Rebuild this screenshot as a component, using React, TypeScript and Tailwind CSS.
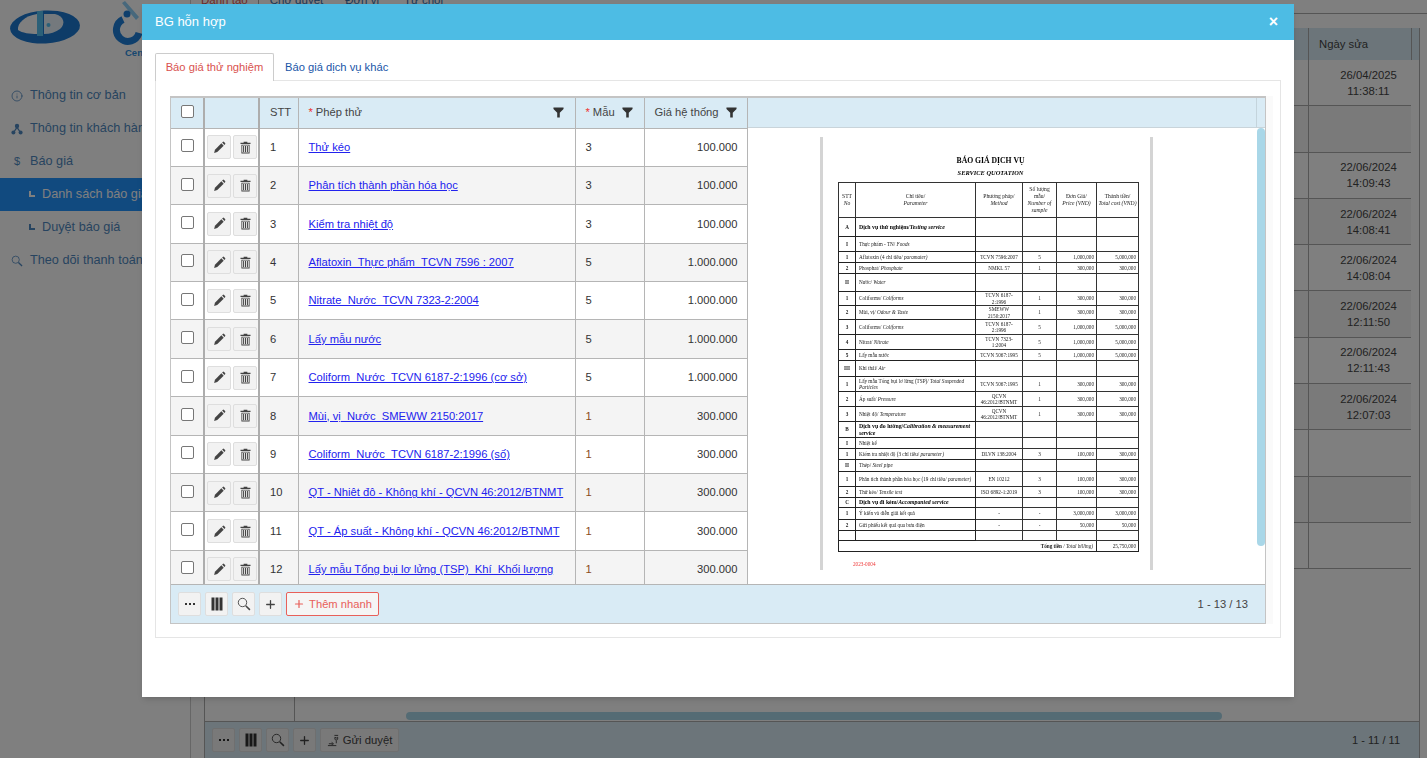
import { Info, Plus } from "lucide-react";

const tests = [
  { name: "Thử kéo", qty: "3", price: "100.000" },
  { name: "Phân tích thành phần hóa học", qty: "3", price: "100.000" },
  { name: "Kiểm tra nhiệt độ", qty: "3", price: "100.000" },
  { name: "Aflatoxin_Thực phẩm_TCVN 7596 : 2007", qty: "5", price: "1.000.000" },
  { name: "Nitrate_Nước_TCVN 7323-2:2004", qty: "5", price: "1.000.000" },
  { name: "Lấy mẫu nước", qty: "5", price: "1.000.000" },
  { name: "Coliform_Nước_TCVN 6187-2:1996 (cơ sở)", qty: "5", price: "1.000.000" },
  { name: "Mùi, vị_Nước_SMEWW 2150:2017", qty: "1", price: "300.000" },
  { name: "Coliform_Nước_TCVN 6187-2:1996 (số)", qty: "1", price: "300.000" },
  { name: "QT - Nhiệt độ - Không khí - QCVN 46:2012/BTNMT", qty: "1", price: "300.000" },
  { name: "QT - Áp suất - Không khí - QCVN 46:2012/BTNMT", qty: "1", price: "300.000" },
  { name: "Lấy mẫu Tổng bụi lơ lửng (TSP)_Khí_Khối lượng", qty: "1", price: "300.000" },
];

const dates = [
  ["26/04/2025", "11:38:11"],
  null,
  ["22/06/2024", "14:09:43"],
  ["22/06/2024", "14:08:41"],
  ["22/06/2024", "14:08:04"],
  ["22/06/2024", "12:11:50"],
  ["22/06/2024", "12:11:43"],
  ["22/06/2024", "12:07:03"],
  null,
  null,
  null,
];

// rows of the scanned quotation, h is the row height in the picture
const docRows = [
  { h: "h-[19px]", no: "A", name: "Dịch vụ thử nghiệm/Testing service", bold: true },
  { h: "h-[15px]", no: "I", name: "Thực phẩm - TN/ Foods" },
  { h: "h-[11px]", no: "1", name: "Aflatoxin (4 chỉ tiêu/ paramater)", m: "TCVN 7596:2007", q: "5", p: "1,000,000", t: "5,000,000" },
  { h: "h-[11px]", no: "2", name: "Phosphat/ Phosphate", m: "NMKL 57", q: "1", p: "300,000", t: "300,000" },
  { h: "h-[18px]", no: "II", name: "Nước/ Water" },
  { h: "h-[14px]", no: "1", name: "Coliforms/ Coliforms", m: "TCVN 6187-2:1996", q: "1", p: "300,000", t: "300,000" },
  { h: "h-[14px]", no: "2", name: "Mùi, vị/ Odour & Taste", m: "SMEWW 2150:2017", q: "1", p: "300,000", t: "300,000" },
  { h: "h-[15px]", no: "3", name: "Coliforms/ Coliforms", m: "TCVN 6187-2:1996", q: "5", p: "1,000,000", t: "5,000,000" },
  { h: "h-[15px]", no: "4", name: "Nitrat/ Nitrate", m: "TCVN 7323-1:2004", q: "5", p: "1,000,000", t: "5,000,000" },
  { h: "h-[11px]", no: "5", name: "Lấy mẫu nước", m: "TCVN 5067:1995", q: "5", p: "1,000,000", t: "5,000,000" },
  { h: "h-[16px]", no: "III", name: "Khí thải/ Air" },
  { h: "h-[15px]", no: "1", name: "Lấy mẫu Tổng bụi lơ lửng (TSP)/ Total Suspended Particles", m: "TCVN 5067:1995", q: "1", p: "300,000", t: "300,000" },
  { h: "h-[15px]", no: "2", name: "Áp suất/ Pressure", m: "QCVN 46:2012/BTNMT", q: "1", p: "300,000", t: "300,000" },
  { h: "h-[15px]", no: "3", name: "Nhiệt độ/ Temperature", m: "QCVN 46:2012/BTNMT", q: "1", p: "300,000", t: "300,000" },
  { h: "h-[16px]", no: "B", name: "Dịch vụ đo lường/Calibration & measurement service", bold: true },
  { h: "h-[11px]", no: "I", name: "Nhiệt kế" },
  { h: "h-[11px]", no: "1", name: "Kiểm tra nhiệt độ (3 chỉ tiêu/ parameter)", m: "DLVN 138:2004", q: "3", p: "100,000", t: "300,000" },
  { h: "h-[12px]", no: "II", name: "Thép/ Steel pipe" },
  { h: "h-[15px]", no: "1", name: "Phân tích thành phần hóa học (19 chỉ tiêu/ parameter)", m: "EN 10212", q: "3", p: "100,000", t: "300,000" },
  { h: "h-[11px]", no: "2", name: "Thử kéo/ Tensile test", m: "ISO 6892-1:2019", q: "3", p: "100,000", t: "300,000" },
  { h: "h-[10px]", no: "C", name: "Dịch vụ đi kèm/Accompanied service", bold: true },
  { h: "h-[12px]", no: "1", name: "Ý kiến và diễn giải kết quả", m: "-", q: "-", p: "3,000,000", t: "3,000,000" },
  { h: "h-[11px]", no: "2", name: "Gửi phiếu kết quả qua bưu điện", m: "-", q: "-", p: "50,000", t: "50,000" },
  { h: "h-[10px]", no: "", name: "", m: "", q: "", p: "", t: "" },
];

function FilterIcon() {
  return (
    <svg viewBox="0 0 12 12" className="h-[11px] w-[11px] shrink-0 fill-[#333]">
      <path d="M0.5 0.5h11v1.8L7.4 6.2v5.3H4.6V6.2L0.5 2.3z" />
    </svg>
  );
}

function PencilIcon() {
  return (
    <svg viewBox="0 0 14 14" className="h-[13px] w-[13px] fill-[#444]">
      <path d="M1.2 12.8l.9-3.4 6.9-6.9 2.5 2.5-6.9 6.9z" />
      <path d="M9.8 1.7l.7-.7a1 1 0 0 1 1.4 0l1.1 1.1a1 1 0 0 1 0 1.4l-.7.7z" />
    </svg>
  );
}

function TrashIcon() {
  return (
    <svg viewBox="0 0 14 14" className="h-[13px] w-[13px] fill-[#444]">
      <path d="M5 .8h4V2h3.4v1.3H1.6V2H5z" />
      <path d="M2.6 4h8.8v9.4H2.6zM3.5 4.9v7.6h7V4.9z" fillRule="evenodd" />
      <rect x="4.4" y="5.4" width="1.1" height="6.6" />
      <rect x="6.45" y="5.4" width="1.1" height="6.6" />
      <rect x="8.5" y="5.4" width="1.1" height="6.6" />
    </svg>
  );
}

function SearchIcon({ className }: { className: string }) {
  return (
    <svg viewBox="0 0 14 14" className={className}>
      <circle cx="5.5" cy="5.5" r="4.2" fill="none" stroke="currentColor" strokeWidth="0.9" />
      <path d="M8.7 8.7l4.2 4.2" stroke="currentColor" strokeWidth="1.5" />
    </svg>
  );
}

function ColumnsIcon() {
  return (
    <svg viewBox="0 0 12 14" className="h-[14px] w-[12px] fill-[#333]">
      <rect x="0.5" y="0.5" width="3" height="13" />
      <rect x="4.5" y="0.5" width="3" height="13" />
      <rect x="8.5" y="0.5" width="3" height="13" />
    </svg>
  );
}

function DotsIcon() {
  return (
    <svg viewBox="0 0 12 12" className="h-[12px] w-[12px] fill-[#333]">
      <rect x="1" y="5" width="2" height="2" />
      <rect x="5" y="5" width="2" height="2" />
      <rect x="9" y="5" width="2" height="2" />
    </svg>
  );
}

function ToolButton({ children, className }: { children: React.ReactNode; className?: string }) {
  return (
    <button className={"flex h-[24px] items-center justify-center rounded-[2px] border border-[#dedede] bg-[#f2f2f2] text-[#444] " + (className || "w-[24px]")}>
      {children}
    </button>
  );
}

function Toolbar() {
  return (
    <>
      <ToolButton className="w-[23px]"><DotsIcon /></ToolButton>
      <ToolButton className="w-[23px]"><ColumnsIcon /></ToolButton>
      <ToolButton className="w-[23px]"><SearchIcon className="h-[14px] w-[14px]" /></ToolButton>
      <ToolButton className="w-[23px]"><Plus className="h-[13px] w-[13px]" strokeWidth={2.4} /></ToolButton>
    </>
  );
}

function Checkbox({ className }: { className?: string }) {
  return <span className={"mx-auto block h-[13px] w-[13px] rounded-[2px] border border-[#777] bg-white " + (className || "")} />;
}

function Sidebar() {
  const itemClass = "flex h-[33px] items-center gap-[7px] pl-[11px] text-[#4f88c0]";
  const subClass = "flex h-[33px] items-center gap-[7px] pl-[29px] text-[#4f88c0]";
  return (
    <aside className="w-[191px] shrink-0 border-r border-[#ccc] text-[12.7px]">
      <div className="relative h-[79px]">
        <svg viewBox="0 0 142 60" className="h-[60px] w-[142px]">
          <ellipse cx="45" cy="27" rx="35" ry="16.5" fill="#1c78d0" transform="rotate(-3 45 27)" />
          <path d="M37 14C25 16 17 23 18 30c4 3 12 4 19 4z" fill="#fff" />
          <path d="M44 14h11c9 2 11 10 5 15-4 3-10 5-16 5z" fill="#e8f2fa" />
          <rect x="37" y="11" width="6" height="25" fill="#56c0f0" />
          <circle cx="48.5" cy="25" r="2" fill="#56c0f0" />
          <path d="M123 19.5A11.5 11.5 0 1 0 139 33" fill="none" stroke="#1f7fd8" strokeWidth="7" />
          <path d="M122 3l3-2 14 16-3 3z" fill="#8fd0f8" />
          <circle cx="127" cy="14" r="3.5" fill="#1f7fd8" />
        </svg>
        <span className="absolute left-[125px] top-[46px] text-[9.5px] font-bold text-[#2f8fe0]">Center</span>
      </div>
      <div className={itemClass}><Info className="h-[12px] w-[12px]" strokeWidth={1.6} />Thông tin cơ bản</div>
      <div className={itemClass}>
        <svg viewBox="0 0 12 12" className="h-[12px] w-[12px] fill-[#4f88c0]">
          <circle cx="6" cy="3" r="2.2" />
          <circle cx="2.4" cy="9.6" r="2" />
          <circle cx="9.6" cy="9.6" r="2" />
          <path d="M5.4 4h1.2L9.8 9H8.4L6 5.6 3.6 9H2.2z" />
        </svg>
        Thông tin khách hàng
      </div>
      <div className={itemClass}><span className="w-[12px] text-center text-[11px]">$</span>Báo giá</div>
      <div className="flex h-[33px] items-center gap-[7px] bg-[#2394fe] pl-[29px] text-white">
        <span className="mb-[2px] h-[6px] w-[6px] border-b-2 border-l-2 border-white" />
        Danh sách báo giá
      </div>
      <div className={subClass}>
        <span className="mb-[2px] h-[6px] w-[6px] border-b-2 border-l-2 border-[#4f88c0]" />
        Duyệt báo giá
      </div>
      <div className={itemClass}><SearchIcon className="h-[12px] w-[12px]" />Theo dõi thanh toán</div>
    </aside>
  );
}

function BackgroundPage() {
  return (
    <main className="flex min-w-0 flex-1 flex-col text-[11.3px] text-[#444]">
      <div className="h-[14px] shrink-0 overflow-hidden border-b border-[#aaa]">
        <div className="-mt-[8px] flex pl-[10px] text-[11.5px] text-[#3a6ea8]">
          <span className="border-r border-[#aaa] pr-[10px] text-[#d9534f]">Danh tạo</span>
          <span className="ml-[11px]">Chờ duyệt</span>
          <span className="ml-[22px]">Đơn vị</span>
          <span className="ml-[25px]">Từ chối</span>
        </div>
      </div>
      <div className="ml-[13px] mt-[14px] flex w-[1216px] flex-1 flex-col border-x border-[#aaa]">
        <div className="flex flex-1">
          <div className="w-[90px] shrink-0 border-r border-[#aaa]" />
          <div className="flex min-w-0 flex-1 flex-col">
            <div className="flex h-[32px] shrink-0 bg-[#d9ebf5]">
              <div className="flex-1" />
              <div className="flex w-[104px] items-center border-x border-[#aaa] pl-[10px]">Ngày sửa</div>
              <div className="w-[7px]" />
            </div>
            {dates.map((d, i) => (
              <div key={i} className={"mr-[8px] flex h-[46.3px] border-b border-[#aaa] " + (i % 2 === 1 ? "bg-[#f4f4f4]" : "")}>
                <div className="flex-1" />
                <div className="flex w-[103px] flex-col items-center justify-center border-l border-[#aaa] pl-[17px] leading-[16px]">
                  {d && <span>{d[0]}</span>}
                  {d && <span>{d[1]}</span>}
                </div>
              </div>
            ))}
            <div className="mb-[1px] ml-[111px] mt-auto h-[8px] w-[816px] rounded-full bg-[#a9d7e8]" />
          </div>
        </div>
        <div className="flex h-[37px] shrink-0 items-center gap-[4px] border-t border-[#aaa] bg-[#d9ebf5] pl-[7px] pr-[19px]">
          <Toolbar />
          <ToolButton className="w-[79px] gap-[3px]">
            <svg viewBox="0 0 14 14" className="h-[13px] w-[13px] fill-none stroke-[#444]">
              <path d="M1 12.5h9M2 10.5h4M5 9l2 1.5-2 1M8 1.5h4M8.5 3.5a2 2 0 0 0 3 0v2a1.6 1.6 0 0 1-3 0zM10 7v3" />
            </svg>
            Gửi duyệt
          </ToolButton>
          <span className="ml-auto text-[11px]">1 - 11 / 11</span>
        </div>
      </div>
    </main>
  );
}

function TestTable() {
  return (
    <table className="w-[576px] table-fixed border-collapse text-[11.2px] text-[#333]">
      <colgroup>
        <col className="w-[33px]" />
        <col className="w-[55px]" />
        <col className="w-[39px]" />
        <col className="w-[277px]" />
        <col className="w-[69px]" />
        <col className="w-[103px]" />
      </colgroup>
      <thead>
        <tr className="h-[30px] bg-[#d9ebf5] text-[#444]">
          <th className="border-b border-[#b5b5b5] font-normal"><Checkbox className="mb-[2px]" /></th>
          <th className="border-x-2 border-b border-x-[#adadad] border-b-[#b5b5b5] font-normal" />
          <th className="border-r border-b border-[#b5b5b5] pl-[10px] text-left font-normal">STT</th>
          <th className="border-r border-b border-[#b5b5b5] pl-[10px] pr-[11px] font-normal">
            <div className="flex items-center justify-between text-left">
              <span><span className="mr-[3px] text-[#e33]">*</span>Phép thử</span>
              <FilterIcon />
            </div>
          </th>
          <th className="border-r border-b border-[#b5b5b5] pl-[10px] font-normal">
            <div className="flex items-center gap-[7px]">
              <span><span className="mr-[3px] text-[#e33]">*</span>Mẫu</span>
              <FilterIcon />
            </div>
          </th>
          <th className="border-r border-b border-[#b5b5b5] pl-[10px] font-normal">
            <div className="flex items-center gap-[7px]">
              <span>Giá hệ thống</span>
              <FilterIcon />
            </div>
          </th>
        </tr>
      </thead>
      <tbody>
        {tests.map((t, i) => (
          <tr key={i} className={"h-[38.4px] " + (i % 2 === 1 ? "bg-[#f4f4f4]" : "bg-white")}>
            <td className="border-b border-[#b5b5b5]"><Checkbox className="mb-[3px]" /></td>
            <td className="border-x-2 border-b border-x-[#adadad] border-b-[#b5b5b5] pl-[2px]">
              <div className="flex gap-[2px]">
                <ToolButton><PencilIcon /></ToolButton>
                <ToolButton><TrashIcon /></ToolButton>
              </div>
            </td>
            <td className="border-r border-b border-[#b5b5b5] pl-[10px]">{i + 1}</td>
            <td className="truncate border-r border-b border-[#b5b5b5] pl-[10px]">
              <a href="#" className="text-[#2222ee] underline">{t.name}</a>
            </td>
            <td className={"border-r border-b border-[#b5b5b5] pl-[10px] " + (t.qty === "1" ? "text-[#8a4b1a]" : "")}>{t.qty}</td>
            <td className="border-r border-b border-[#b5b5b5] pr-[9px] text-right">{t.price}</td>
          </tr>
        ))}
      </tbody>
    </table>
  );
}

function DocName({ name }: { name: string }) {
  const at = name.indexOf("/");
  if (at < 0) return <>{name}</>;
  return (
    <>
      {name.slice(0, at + 1)}
      <i>{name.slice(at + 1)}</i>
    </>
  );
}

function QuotationDoc() {
  return (
    <div className="ml-[72px] flex h-[433px] w-[333px] flex-col border-x-[3px] border-[#d4d4d4] pl-[15px] pr-[9px] font-['Liberation_Serif',serif] text-[5.2px] leading-[6.4px] text-[#222] blur-[0.25px]">
      <div className="mt-[19px] pl-[2px] text-center text-[7.7px] font-bold leading-[9px] text-black">BÁO GIÁ DỊCH VỤ</div>
      <div className="mt-[4px] pl-[2px] text-center text-[6.4px] font-bold italic leading-[7px] text-black">SERVICE QUOTATION</div>
      <table className="mt-[6px] w-[300px] table-fixed border-collapse border border-[#222]">
        <colgroup>
          <col className="w-[17px]" />
          <col className="w-[120px]" />
          <col className="w-[47px]" />
          <col className="w-[34px]" />
          <col className="w-[40px]" />
          <col className="w-[42px]" />
        </colgroup>
        <thead>
          <tr className="h-[35px] text-center text-[5.6px] leading-[7px]">
            <td className="border border-[#333]">STT<br /><i>No</i></td>
            <td className="border border-[#333]">Chỉ tiêu/<br /><i>Parameter</i></td>
            <td className="border border-[#333]">Phương pháp/<br /><i>Method</i></td>
            <td className="border border-[#333]">Số lượng mẫu/<br /><i>Number of sample</i></td>
            <td className="border border-[#333]">Đơn Giá/<br /><i>Price (VND)</i></td>
            <td className="border border-[#333]">Thành tiền/<br /><i>Total cost (VND)</i></td>
          </tr>
        </thead>
        <tbody>
          {docRows.map((r, i) => (
            <tr key={i} className={r.h}>
              <td className="border border-[#222] text-center font-semibold">{r.no}</td>
              <td className={"border border-[#222] pl-[3px] " + (r.bold ? "text-[5.8px] font-bold leading-[7px] text-black" : "")}><DocName name={r.name} /></td>
              <td className="border border-[#333] px-[3px] text-center">{r.m}</td>
              <td className="border border-[#333] text-center">{r.q}</td>
              <td className="border border-[#333] pr-[2px] text-right">{r.p}</td>
              <td className="border border-[#333] pr-[2px] text-right">{r.t}</td>
            </tr>
          ))}
          <tr className="h-[11px]">
            <td colSpan={5} className="border border-[#222] pr-[3px] text-right"><b>Tổng tiền</b> / <i>Total billing)</i></td>
            <td className="border border-[#222] pr-[2px] text-right">25,750,000</td>
          </tr>
        </tbody>
      </table>
      <div className="ml-[15px] mt-[9px] text-[#e33]">2023-0004</div>
    </div>
  );
}

function QuoteModal() {
  return (
    <div className="absolute left-[142px] top-[4px] flex h-[693px] w-[1152px] flex-col bg-white shadow-md">
      <div className="flex h-[36px] shrink-0 items-center justify-between bg-[#4dbce4] pl-[13px] pr-[16px] text-white">
        <span className="text-[13px]">BG hỗn hợp</span>
        <span className="text-[16px] font-bold leading-none">×</span>
      </div>
      <div className="px-[13px] pt-[13px]">
        <div className="flex h-[28px] text-[11.2px]">
          <div className="z-10 flex h-[28px] w-[119px] items-center justify-center rounded-t-[2px] border-x border-t border-[#ccc] bg-white text-[#d9534f]">
            Báo giá thử nghiệm
          </div>
          <div className="flex items-center pl-[11px] text-[#1a56a8]">Báo giá dịch vụ khác</div>
        </div>
        <div className="-mt-px h-[558px] w-[1126px] border border-[#e5e5e5] pl-[14px] pt-[15px]">
          <div className="flex h-[528px] w-[1103px]">
            <div className="flex h-[528px] w-[1096px] flex-col border border-t-2 border-[#c4c4c4]">
              <div className="flex h-[486px] overflow-hidden">
                <div className="h-[486px] w-[576px] shrink-0 overflow-hidden"><TestTable /></div>
                <div className="relative min-w-0 flex-1 border-l border-[#b5b5b5]">
                  <div className="flex h-[30px] justify-end border-b border-[#c9d4da] bg-[#d9ebf5]">
                    <div className="w-[9px] border-l border-[#c4d4dc]" />
                  </div>
                  <div className="pt-[9px]"><QuotationDoc /></div>
                  <div className="absolute right-0 top-[30px] h-[418px] w-[8px] rounded-full bg-[#a9d7e8]" />
                </div>
              </div>
              <div className="flex flex-1 items-center gap-[4px] border-t border-[#b5b5b5] bg-[#d9ebf5] pl-[7px] pr-[17px] text-[11.2px] text-[#444]">
                <Toolbar />
                <button className="flex h-[24px] w-[93px] items-center justify-center gap-[4px] rounded-[2px] border border-[#e8605a] bg-[#f5f5f5] text-[#e8605a]">
                  <Plus className="h-[12px] w-[12px]" strokeWidth={2.4} />
                  Thêm nhanh
                </button>
                <span className="ml-auto">1 - 13 / 13</span>
              </div>
            </div>
            <div className="w-[7px] bg-[#fafafa]" />
          </div>
        </div>
      </div>
    </div>
  );
}

export default function App() {
  return (
    <div className="relative flex h-[758px] w-[1427px] overflow-hidden bg-white font-['Liberation_Sans',Arial,sans-serif]">
      <Sidebar />
      <BackgroundPage />
      <div className="absolute inset-0 bg-black/50" />
      <QuoteModal />
    </div>
  );
}
